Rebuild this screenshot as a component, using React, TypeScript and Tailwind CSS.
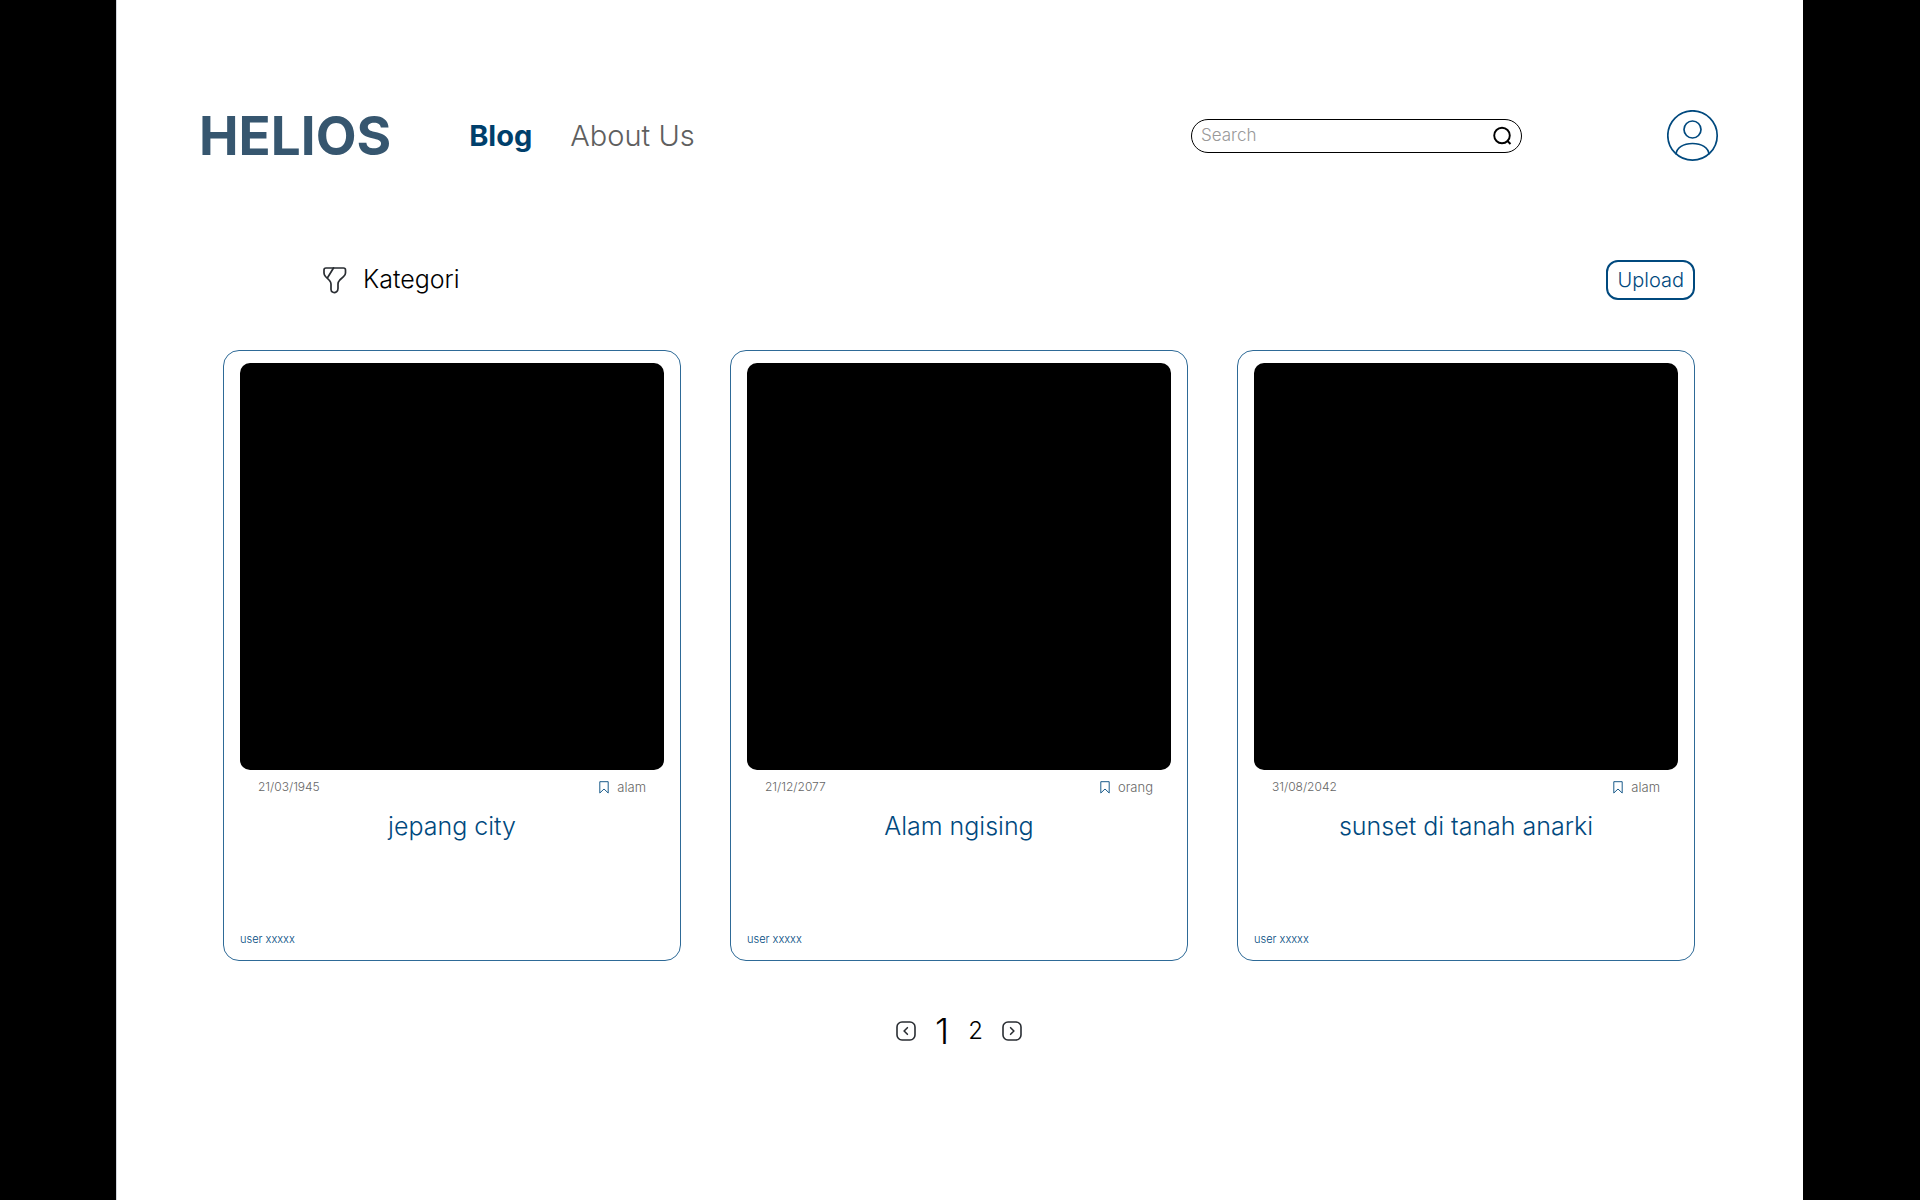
const posts = [
  { date: '21/03/1945', tag: 'alam', title: 'jepang city', user: 'user xxxxx' },
  { date: '21/12/2077', tag: 'orang', title: 'Alam ngising', user: 'user xxxxx' },
  { date: '31/08/2042', tag: 'alam', title: 'sunset di tanah anarki', user: 'user xxxxx' },
];

function SearchIcon() {
  return (
    <svg width="20" height="20" viewBox="0 0 20 20" fill="none" stroke="#000" strokeWidth="1.9" aria-hidden="true">
      <circle cx="9" cy="9.5" r="7.8" />
      <path d="M14 14.500L17.500 18" />
    </svg>
  );
}

function ProfileIcon() {
  return (
    <svg width="52" height="52" viewBox="0 0 52 52" fill="none" stroke="#00497e" strokeWidth="1.7" aria-hidden="true">
      <circle cx="25.5" cy="25.5" r="24.7" />
      <circle cx="25.5" cy="19.5" r="8.5" />
      <path d="M9 44.500C9.500 37.500 16.500 33.500 25.500 33.500S41.500 37.500 42 44.500" />
    </svg>
  );
}

function FilterIcon() {
  return (
    <svg width="24" height="27" viewBox="0 0 24 27" fill="none" stroke="#292d32" strokeWidth="1.7" strokeLinecap="round" strokeLinejoin="round" aria-hidden="true">
      <path d="M3 1H20.500Q22.500 1 22.500 3V6C22.500 7.500 21.500 8.800 20.500 9.700L16.800 13C15.800 14 15 15.500 15 17V21.500C15 23 14.500 24 13.500 24.800C11.500 26.200 8 25.500 8 22.500V17C8 15.800 7.300 14.500 6.500 13.500L2.500 9.500C1.600 8.500 1 7.200 1 6V3Q1 1 3 1Z" />
      <path d="M10.500 1L4.500 10.800" />
    </svg>
  );
}

function BookmarkIcon() {
  return (
    <svg width="10" height="13" viewBox="0 0 10 13" fill="none" stroke="#00497e" aria-hidden="true">
      <path d="M.8 .7H9.200V12L5 8L.8 12Z" strokeWidth=".9" />
    </svg>
  );
}

function PageArrow({ next = false }: { next?: boolean }) {
  return (
    <svg width="20" height="20" viewBox="0 0 20 20" fill="none" stroke="#292d32" strokeWidth="1.6" strokeLinecap="round" strokeLinejoin="round" aria-hidden="true">
      <rect x="1" y="1" width="18" height="18" rx="5" />
      <path d={next ? 'M8.600 6.700L11.900 10L8.600 13.300' : 'M11.400 6.700L8.100 10L11.400 13.300'} />
    </svg>
  );
}

export default function App() {
  return (
    <div className="min-h-screen bg-black pr-[117px] pl-[116px] font-['Inter',sans-serif] font-light">
      <div className="min-h-screen border-l border-gray-300 bg-white">
        <header className="flex items-center pt-[108px] pr-[84px] pl-[82px]">
          <a href="#" className="text-[53px] leading-14 font-bold text-[#36566f]">HELIOS</a>
          <nav className="ml-[78px] flex items-center gap-[38px] text-[29px] leading-8">
            <a href="#blog" className="font-bold text-[#003f6b]">Blog</a>
            <a href="#about" className="text-[#5f5f5f]">About Us</a>
          </nav>
          <form className="mr-[145px] ml-auto flex h-[34px] w-[331px] items-center rounded-full border border-black pr-2 pl-[9px]">
            <input type="search" aria-label="Search" placeholder="Search" className="min-w-0 flex-1 bg-transparent text-[17px] outline-none placeholder:text-[#999999]" />
            <button type="submit" aria-label="Submit search"><SearchIcon /></button>
          </form>
          <button type="button" aria-label="Profile"><ProfileIcon /></button>
        </header>

        <main className="pr-[108px] pl-[106px]">
          <div className="mt-24 flex items-center justify-between pl-[100px]">
            <button type="button" className="flex items-center gap-4 text-[25px] text-black">
              <FilterIcon />
              Kategori
            </button>
            <button type="button" className="h-10 rounded-xl border-2 border-[#00497e] px-[9px] text-xl text-[#00497e]">
              Upload
            </button>
          </div>

          <div className="mt-[50px] grid grid-cols-3 gap-[49px]">
            {posts.map((post) => (
              <article key={post.title} className="flex flex-col rounded-2xl border border-[#2e6a97] px-4 pt-3 pb-[13px] text-[#00497e]">
                <div className="h-[407px] rounded-[10px] bg-black" />
                <div className="mt-[9px] flex items-center justify-between px-[18px] leading-4 text-[#666666]">
                  <time className="text-xs leading-4">{post.date}</time>
                  <span className="flex items-center gap-2 text-[13px] leading-4">
                    <BookmarkIcon />
                    {post.tag}
                  </span>
                </div>
                <h2 className="mt-[13px] text-center text-[25px] leading-9">{post.title}</h2>
                <p className="mt-[87px] text-[11px] leading-4">{post.user}</p>
              </article>
            ))}
          </div>

          <nav aria-label="Pagination" className="mt-[50px] flex h-10 items-center justify-center gap-[19px] text-2xl text-black">
            <button type="button" aria-label="Previous page"><PageArrow /></button>
            <button type="button" aria-current="page" className="text-4xl">1</button>
            <button type="button">2</button>
            <button type="button" aria-label="Next page"><PageArrow next /></button>
          </nav>
        </main>
      </div>
    </div>
  );
}
